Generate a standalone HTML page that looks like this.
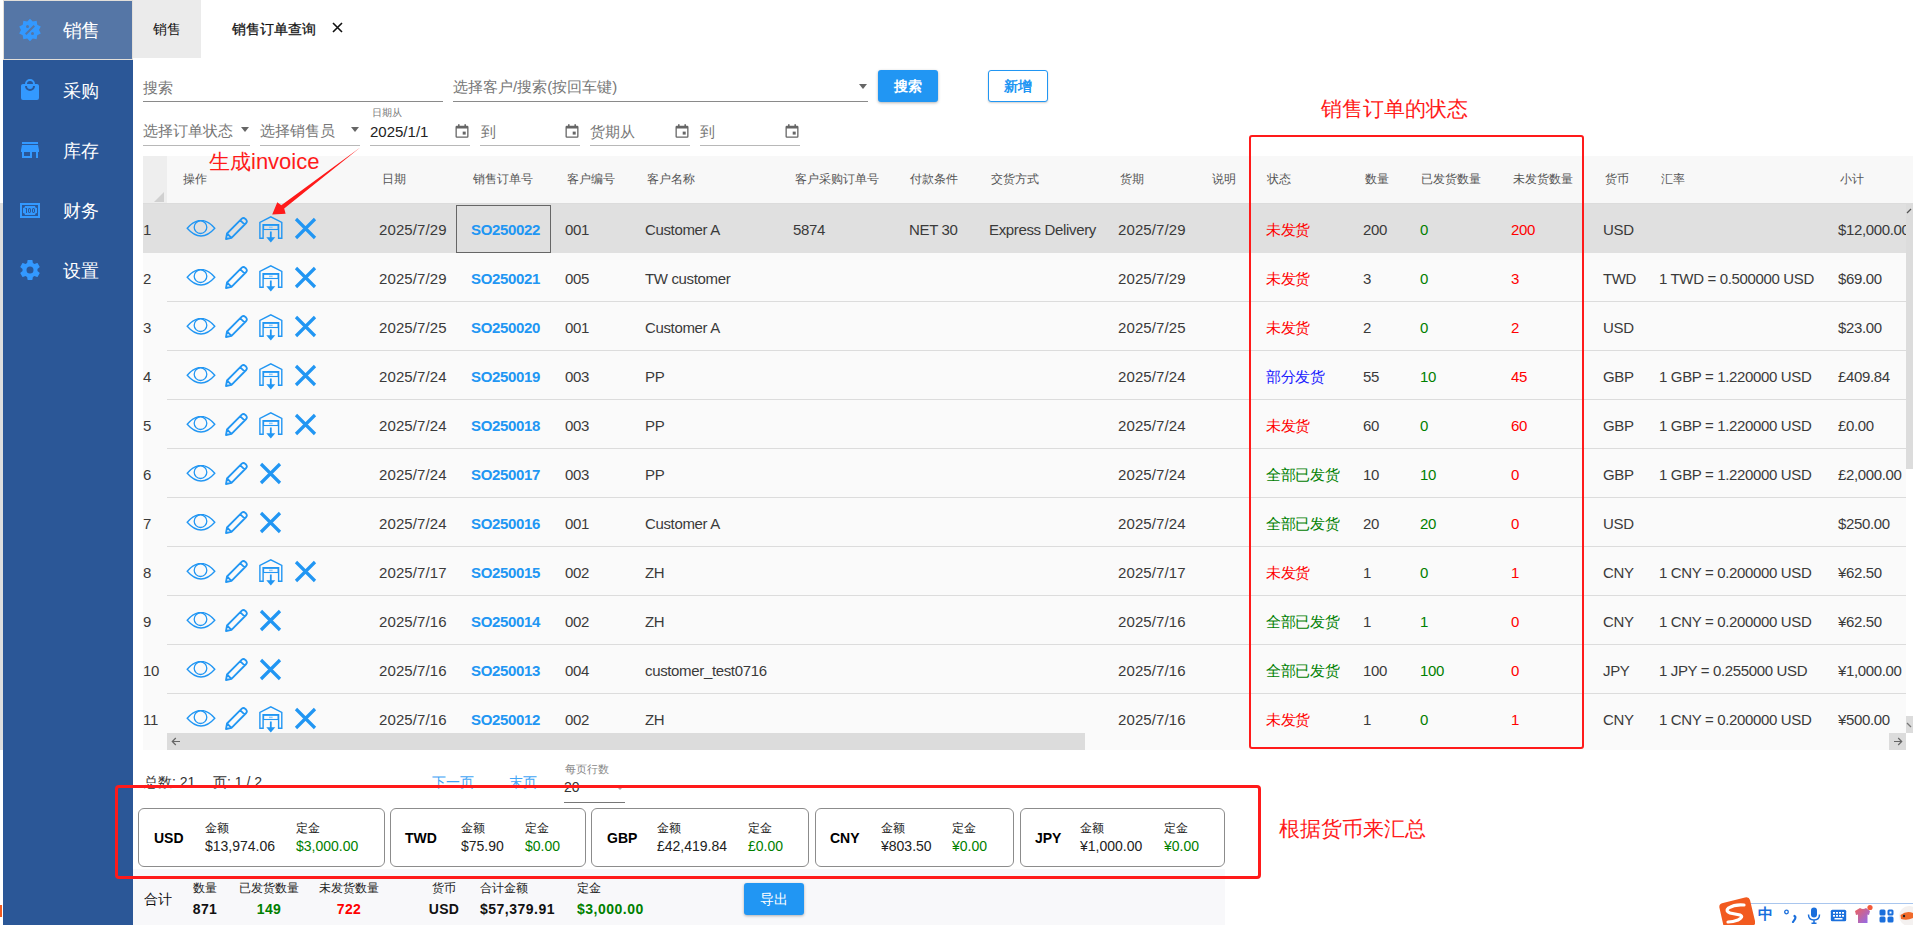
<!DOCTYPE html>
<html><head><meta charset="utf-8">
<style>
*{margin:0;padding:0;box-sizing:border-box}
html,body{width:1913px;height:925px;overflow:hidden;background:#fff;font-family:"Liberation Sans",sans-serif;color:#333;position:relative}
.abs{position:absolute}
#lstrip{position:absolute;left:0;top:203px;width:3px;height:547px;background:#dedede}
#side{position:absolute;left:3px;top:0;width:130px;height:925px;background:#2b5797}
#selitem{position:absolute;left:3px;top:0;width:130px;height:60px;background:#e2dfda}
#selin{position:absolute;left:4px;top:1px;width:128px;height:58px;background:#5576a6}
.mi{position:absolute;left:63px;color:#fff;font-size:18px;line-height:20px;height:20px;white-space:nowrap}
.mic{position:absolute}
#tab1{position:absolute;left:133px;top:0;width:68px;height:58px;background:#ebebeb}
.tabt{position:absolute;font-size:14px;line-height:16px;color:#111;white-space:nowrap}
.ph{position:absolute;font-size:15px;line-height:17px;color:#777;white-space:nowrap}
.ul{position:absolute;height:1px;background:#8a8a8a}
.ul2{position:absolute;height:1px;background:#b8b8b8}
.caret{position:absolute;width:0;height:0;border-left:4.5px solid transparent;border-right:4.5px solid transparent;border-top:5px solid #666}
.btn{position:absolute;border-radius:3px;font-size:14px;font-weight:bold;text-align:center;line-height:33px}
#hdrbg{position:absolute;left:143px;top:156px;width:1770px;height:48px;background:#f8f8f8;border-bottom:1px solid #dcdcdc}
#corner{position:absolute;left:143px;top:156px;width:24px;height:47px;background:#eeeeee}
.h{position:absolute;top:172px;font-size:12px;line-height:14px;color:#555;font-weight:500;white-space:nowrap}
#bodybg{position:absolute;left:143px;top:204px;width:1763px;height:546px;background:#fafafa}
.row{position:absolute;left:143px;width:1763px;height:49px}
.row.sel{background:#e0e0e0}
.rline{position:absolute;left:167px;width:1739px;height:1px;background:#dcdcdc}
.c{position:absolute;height:49px;line-height:49px;padding-top:1px;font-size:15px;color:#3a3a3a;white-space:nowrap;letter-spacing:-0.35px}
.c.d{letter-spacing:0.1px}
.c.so{color:#2196f3;font-weight:bold}
.c.red{color:#ff0000;font-weight:350}
.c.green{color:#008000;font-weight:350}
.c.blue{color:#2020ff;font-weight:350}
.ic{position:absolute}
.pg{font-size:14px;line-height:16px;color:#333;white-space:nowrap}
.anno{font-size:21px;line-height:24px;color:#ff1a1a;white-space:nowrap}
.card{position:absolute;top:808px;height:59px;border:1.3px solid #8c8c8c;border-radius:6px;background:#fff}
.cc{position:absolute;font-size:14px;line-height:16px;white-space:nowrap;color:#222}
.cl{position:absolute;font-size:12px;line-height:14px;white-space:nowrap;color:#222}
.selcell{position:absolute;left:456px;width:95px;height:48px;border:1px solid #666}
</style></head><body>
<div id="lstrip"></div><div class="abs" style="left:0;top:905px;width:2px;height:12px;background:#f25a1f"></div>
<div id="side"></div>
<div id="selitem"></div><div id="selin"></div>
<!-- menu icons -->
<svg class="mic" style="left:18px;top:18px" width="24" height="24" viewBox="0 0 24 24"><path fill="#3399ff" fill-rule="evenodd" d="M18.65,2.85L19.26,6.71L22.77,8.5L21,12L22.78,15.5L19.24,17.29L18.63,21.15L14.74,20.54L11.97,23.3L9.19,20.5L5.33,21.14L4.71,17.25L1.22,15.47L3,11.97L1.23,8.5L4.74,6.69L5.37,2.86L9.22,3.5L12,0.69L14.77,3.46L18.65,2.85M9.5,7A1.5,1.5 0 0,0 8,8.5A1.5,1.5 0 0,0 9.5,10A1.5,1.5 0 0,0 11,8.5A1.5,1.5 0 0,0 9.5,7M14.5,14A1.5,1.5 0 0,0 13,15.5A1.5,1.5 0 0,0 14.5,17A1.5,1.5 0 0,0 16,15.5A1.5,1.5 0 0,0 14.5,14M8.41,17L17,8.41L15.59,7L7,15.59L8.41,17Z"/></svg>
<svg class="mic" style="left:18px;top:78px" width="24" height="24" viewBox="0 0 24 24"><path fill="#3399ff" fill-rule="evenodd" d="M12,13A5,5 0 0,1 7,8H9A3,3 0 0,0 12,11A3,3 0 0,0 15,8H17A5,5 0 0,1 12,13M12,3A3,3 0 0,1 15,6H9A3,3 0 0,1 12,3M19,6H17A5,5 0 0,0 12,1A5,5 0 0,0 7,6H5C3.89,6 3,6.89 3,8V20A2,2 0 0,0 5,22H19A2,2 0 0,0 21,20V8C21,6.89 20.1,6 19,6Z"/></svg>
<svg class="mic" style="left:18px;top:138px" width="24" height="24" viewBox="0 0 24 24"><path fill="#3399ff" fill-rule="evenodd" d="M12,18H6V14H12V18ZM21,14V12L20,7H4L3,12V14H4V20H14V14H18V20H20V14H21ZM20,4H4V6H20V4Z"/></svg>
<svg class="mic" style="left:18px;top:198px" width="24" height="24" viewBox="0 0 24 24"><path fill="#3399ff" fill-rule="evenodd" d="M2,5H22V20H2V5M20,18V7H4V18H20M17,8A2,2 0 0,0 19,10V15A2,2 0 0,0 17,17H7A2,2 0 0,0 5,15V10A2,2 0 0,0 7,8H17M17,13V12C17,10.9 16.33,10 15.5,10C14.67,10 14,10.9 14,12V13C14,14.1 14.67,15 15.5,15C16.33,15 17,14.1 17,13M15.5,11A0.5,0.5 0 0,1 16,11.5V13.5A0.5,0.5 0 0,1 15.5,14A0.5,0.5 0 0,1 15,13.5V11.5A0.5,0.5 0 0,1 15.5,11M13,13V12C13,10.9 12.33,10 11.5,10C10.67,10 10,10.9 10,12V13C10,14.1 10.67,15 11.5,15C12.330,15 13,14.1 13,13M11.5,11A0.5,0.5 0 0,1 12,11.5V13.5A0.5,0.5 0 0,1 11.5,14A0.5,0.5 0 0,1 11,13.5V11.5A0.5,0.5 0 0,1 11.5,11M8,15H9V10H8L7,11H8V15Z"/></svg>
<svg class="mic" style="left:18px;top:258px" width="24" height="24" viewBox="0 0 24 24"><path fill="#3399ff" d="M12,15.5A3.5,3.5 0 0,1 8.5,12A3.5,3.5 0 0,1 12,8.5A3.5,3.5 0 0,1 15.5,12A3.5,3.5 0 0,1 12,15.5M19.43,12.97C19.47,12.65 19.5,12.33 19.5,12C19.5,11.67 19.47,11.34 19.43,11L21.54,9.37C21.73,9.22 21.78,8.95 21.66,8.73L19.66,5.27C19.54,5.05 19.27,4.96 19.05,5.05L16.56,6.05C16.04,5.66 15.5,5.32 14.87,5.07L14.5,2.42C14.46,2.18 14.25,2 14,2H10C9.75,2 9.54,2.18 9.5,2.42L9.13,5.07C8.5,5.32 7.96,5.66 7.44,6.05L4.95,5.05C4.73,4.96 4.46,5.05 4.34,5.27L2.34,8.73C2.21,8.95 2.27,9.22 2.46,9.37L4.57,11C4.53,11.34 4.5,11.67 4.5,12C4.5,12.33 4.53,12.65 4.57,12.97L2.46,14.63C2.27,14.78 2.21,15.05 2.34,15.27L4.34,18.73C4.46,18.95 4.73,19.03 4.95,18.95L7.44,17.94C7.96,18.34 8.5,18.68 9.13,18.93L9.5,21.58C9.54,21.82 9.75,22 10,22H14C14.25,22 14.46,21.82 14.5,21.58L14.87,18.93C15.5,18.67 16.04,18.34 16.56,17.94L19.05,18.95C19.27,19.03 19.54,18.95 19.66,18.73L21.66,15.27C21.78,15.05 21.73,14.78 21.54,14.63L19.43,12.97Z"/></svg>
<div class="mi" style="top:20.5px;font-size:19px;letter-spacing:-1px">销售</div>
<div class="mi" style="top:81px">采购</div>
<div class="mi" style="top:141px">库存</div>
<div class="mi" style="top:201px">财务</div>
<div class="mi" style="top:261px">设置</div>

<!-- tabs -->
<div id="tab1"></div>
<div class="tabt" style="left:153px;top:21px">销售</div>
<div class="tabt" style="left:232px;top:21px;font-weight:500;-webkit-text-stroke:0.25px #111">销售订单查询</div>
<svg class="abs" style="left:332px;top:22px" width="11" height="11" viewBox="0 0 11 11"><path d="M1 1 L10 10 M10 1 L1 10" stroke="#111" stroke-width="1.6"/></svg>

<!-- search row -->
<div class="ph" style="left:143px;top:79px">搜索</div>
<div class="ul" style="left:143px;top:101px;width:300px"></div>
<div class="ph" style="left:453px;top:78px">选择客户/搜索(按回车键)</div>
<div class="caret" style="left:859px;top:84px"></div>
<div class="ul" style="left:453px;top:101px;width:415px"></div>
<div class="btn" style="left:878px;top:70px;width:60px;height:32px;background:#2196f3;color:#fff;box-shadow:0 1px 3px rgba(0,0,0,.3)">搜索</div>
<div class="btn" style="left:988px;top:70px;width:60px;height:32px;background:#fff;color:#2196f3;border:1px solid #2196f3;line-height:30px;box-shadow:0 1px 2px rgba(0,0,0,.2)">新增</div>

<!-- filter row -->
<div class="ph" style="left:143px;top:122px">选择订单状态</div>
<div class="caret" style="left:241px;top:127px"></div>
<div class="ul2" style="left:143px;top:145px;width:107px"></div>
<div class="ph" style="left:260px;top:122px">选择销售员</div>
<div class="caret" style="left:351px;top:127px"></div>
<div class="ul2" style="left:260px;top:145px;width:100px"></div>
<div class="ph" style="left:372px;top:107px;font-size:10px;line-height:11px">日期从</div>
<div class="ph" style="left:370px;top:123px;color:#222">2025/1/1</div>
<div class="ul2" style="left:370px;top:145px;width:100px"></div>
<div class="ph" style="left:481px;top:123px">到</div>
<div class="ul2" style="left:480px;top:145px;width:100px"></div>
<div class="ph" style="left:590px;top:123px">货期从</div>
<div class="ul2" style="left:590px;top:145px;width:100px"></div>
<div class="ph" style="left:700px;top:123px">到</div>
<div class="ul2" style="left:700px;top:145px;width:100px"></div>
<svg class="abs" style="left:455px;top:124px" width="14" height="14" viewBox="0 0 14 14"><path fill="#666" d="M3 0.3h1.6v1.5h4.8V0.3H11v1.5h1.2Q13.5 1.8 13.5 3.2v9.2Q13.5 13.7 12.2 13.7H1.8Q0.5 13.7 0.5 12.4V3.2Q0.5 1.8 1.8 1.8H3Z M1.8 4.6v7.8h10.4V4.6Z"/><rect x="7.7" y="7.6" width="3" height="3" fill="#666"/></svg><svg class="abs" style="left:565px;top:124px" width="14" height="14" viewBox="0 0 14 14"><path fill="#666" d="M3 0.3h1.6v1.5h4.8V0.3H11v1.5h1.2Q13.5 1.8 13.5 3.2v9.2Q13.5 13.7 12.2 13.7H1.8Q0.5 13.7 0.5 12.4V3.2Q0.5 1.8 1.8 1.8H3Z M1.8 4.6v7.8h10.4V4.6Z"/><rect x="7.7" y="7.6" width="3" height="3" fill="#666"/></svg><svg class="abs" style="left:675px;top:124px" width="14" height="14" viewBox="0 0 14 14"><path fill="#666" d="M3 0.3h1.6v1.5h4.8V0.3H11v1.5h1.2Q13.5 1.8 13.5 3.2v9.2Q13.5 13.7 12.2 13.7H1.8Q0.5 13.7 0.5 12.4V3.2Q0.5 1.8 1.8 1.8H3Z M1.8 4.6v7.8h10.4V4.6Z"/><rect x="7.7" y="7.6" width="3" height="3" fill="#666"/></svg><svg class="abs" style="left:785px;top:124px" width="14" height="14" viewBox="0 0 14 14"><path fill="#666" d="M3 0.3h1.6v1.5h4.8V0.3H11v1.5h1.2Q13.5 1.8 13.5 3.2v9.2Q13.5 13.7 12.2 13.7H1.8Q0.5 13.7 0.5 12.4V3.2Q0.5 1.8 1.8 1.8H3Z M1.8 4.6v7.8h10.4V4.6Z"/><rect x="7.7" y="7.6" width="3" height="3" fill="#666"/></svg>

<!-- grid -->
<div id="hdrbg"></div>
<div id="corner"></div>
<svg class="abs" style="left:154px;top:192px" width="10" height="10"><path d="M10 0 L10 10 L0 10 Z" fill="#d0d0d0"/></svg>
<div class="h" style="left:183px">操作</div><div class="h" style="left:382px">日期</div><div class="h" style="left:473px">销售订单号</div><div class="h" style="left:567px">客户编号</div><div class="h" style="left:647px">客户名称</div><div class="h" style="left:795px">客户采购订单号</div><div class="h" style="left:910px">付款条件</div><div class="h" style="left:991px">交货方式</div><div class="h" style="left:1120px">货期</div><div class="h" style="left:1212px">说明</div><div class="h" style="left:1267px">状态</div><div class="h" style="left:1365px">数量</div><div class="h" style="left:1421px">已发货数量</div><div class="h" style="left:1513px">未发货数量</div><div class="h" style="left:1605px">货币</div><div class="h" style="left:1661px">汇率</div><div class="h" style="left:1840px">小计</div>
<div id="bodybg"></div>
<div class="row sel" style="top:204px"></div>
<div class="c" style="left:143px;top:204px">1</div>
<div class="c d" style="left:379px;top:204px">2025/7/29</div>
<div class="c so" style="left:471px;top:204px">SO250022</div>
<div class="c" style="left:565px;top:204px">001</div>
<div class="c" style="left:645px;top:204px">Customer A</div>
<div class="c" style="left:793px;top:204px">5874</div>
<div class="c" style="left:909px;top:204px">NET 30</div>
<div class="c" style="left:989px;top:204px">Express Delivery</div>
<div class="c d" style="left:1118px;top:204px">2025/7/29</div>
<div class="c red" style="left:1266px;top:204px">未发货</div>
<div class="c" style="left:1363px;top:204px">200</div>
<div class="c green" style="left:1420px;top:204px">0</div>
<div class="c red" style="left:1511px;top:204px">200</div>
<div class="c" style="left:1603px;top:204px">USD</div>
<div class="c" style="left:1838px;top:204px">$12,000.00</div>
<svg class="ic" style="left:186px;top:220px" width="30" height="17" viewBox="0 0 30 17"><path d="M1.2 8.2 Q15 -7.4 28.8 8.2 Q15 23.8 1.2 8.2 Z" fill="none" stroke="#2196f3" stroke-width="1.3"/><circle cx="14.5" cy="7.2" r="6.3" fill="none" stroke="#2196f3" stroke-width="1.3"/></svg>
<svg class="ic" style="left:225px;top:217px" width="23" height="23" viewBox="0 0 23 23"><path d="M1 22 L2 16.5 L16.8 1.7 Q18.5 0.2 20.3 1.8 L21 2.5 Q22.6 4.3 21.2 6 L6.5 20.8 Z M2 16.5 L6.5 20.8 M15.3 3.3 L19.8 7.6" fill="none" stroke="#2196f3" stroke-width="1.8" stroke-linejoin="round"/></svg>
<svg class="ic" style="left:258px;top:216px" width="26" height="28" viewBox="0 0 26 28"><path d="M1.9 22.3 V6.4 L12.8 0.9 L23.8 6.4 V22.3 H20.6 V8.6 H5.1 V22.3 Z" fill="none" stroke="#2196f3" stroke-width="1.4" stroke-linejoin="miter"/><rect x="5.6" y="9.3" width="14.5" height="4.2" fill="none" stroke="#2196f3" stroke-width="1.1"/><rect x="11" y="10.6" width="3.6" height="1.6" fill="#90caf9"/><path d="M12.8 15.5 V24" stroke="#2196f3" stroke-width="1.8"/><path d="M8.3 21.3 L12.8 26.6 L17.3 21.3 Z" fill="#2196f3"/></svg>
<svg class="ic" style="left:294px;top:217px" width="23" height="23" viewBox="0 0 23 23"><path d="M2 2 L21 21 M21 2 L2 21" stroke="#2196f3" stroke-width="3.2"/></svg>
<div class="selcell" style="top:205px"></div>
<div class="row" style="top:253px"></div>
<div class="rline" style="top:301px"></div>
<div class="c" style="left:143px;top:253px">2</div>
<div class="c d" style="left:379px;top:253px">2025/7/29</div>
<div class="c so" style="left:471px;top:253px">SO250021</div>
<div class="c" style="left:565px;top:253px">005</div>
<div class="c" style="left:645px;top:253px">TW customer</div>
<div class="c d" style="left:1118px;top:253px">2025/7/29</div>
<div class="c red" style="left:1266px;top:253px">未发货</div>
<div class="c" style="left:1363px;top:253px">3</div>
<div class="c green" style="left:1420px;top:253px">0</div>
<div class="c red" style="left:1511px;top:253px">3</div>
<div class="c" style="left:1603px;top:253px">TWD</div>
<div class="c" style="left:1659px;top:253px">1 TWD = 0.500000 USD</div>
<div class="c" style="left:1838px;top:253px">$69.00</div>
<svg class="ic" style="left:186px;top:269px" width="30" height="17" viewBox="0 0 30 17"><path d="M1.2 8.2 Q15 -7.4 28.8 8.2 Q15 23.8 1.2 8.2 Z" fill="none" stroke="#2196f3" stroke-width="1.3"/><circle cx="14.5" cy="7.2" r="6.3" fill="none" stroke="#2196f3" stroke-width="1.3"/></svg>
<svg class="ic" style="left:225px;top:266px" width="23" height="23" viewBox="0 0 23 23"><path d="M1 22 L2 16.5 L16.8 1.7 Q18.5 0.2 20.3 1.8 L21 2.5 Q22.6 4.3 21.2 6 L6.5 20.8 Z M2 16.5 L6.5 20.8 M15.3 3.3 L19.8 7.6" fill="none" stroke="#2196f3" stroke-width="1.8" stroke-linejoin="round"/></svg>
<svg class="ic" style="left:258px;top:265px" width="26" height="28" viewBox="0 0 26 28"><path d="M1.9 22.3 V6.4 L12.8 0.9 L23.8 6.4 V22.3 H20.6 V8.6 H5.1 V22.3 Z" fill="none" stroke="#2196f3" stroke-width="1.4" stroke-linejoin="miter"/><rect x="5.6" y="9.3" width="14.5" height="4.2" fill="none" stroke="#2196f3" stroke-width="1.1"/><rect x="11" y="10.6" width="3.6" height="1.6" fill="#90caf9"/><path d="M12.8 15.5 V24" stroke="#2196f3" stroke-width="1.8"/><path d="M8.3 21.3 L12.8 26.6 L17.3 21.3 Z" fill="#2196f3"/></svg>
<svg class="ic" style="left:294px;top:266px" width="23" height="23" viewBox="0 0 23 23"><path d="M2 2 L21 21 M21 2 L2 21" stroke="#2196f3" stroke-width="3.2"/></svg>
<div class="row" style="top:302px"></div>
<div class="rline" style="top:350px"></div>
<div class="c" style="left:143px;top:302px">3</div>
<div class="c d" style="left:379px;top:302px">2025/7/25</div>
<div class="c so" style="left:471px;top:302px">SO250020</div>
<div class="c" style="left:565px;top:302px">001</div>
<div class="c" style="left:645px;top:302px">Customer A</div>
<div class="c d" style="left:1118px;top:302px">2025/7/25</div>
<div class="c red" style="left:1266px;top:302px">未发货</div>
<div class="c" style="left:1363px;top:302px">2</div>
<div class="c green" style="left:1420px;top:302px">0</div>
<div class="c red" style="left:1511px;top:302px">2</div>
<div class="c" style="left:1603px;top:302px">USD</div>
<div class="c" style="left:1838px;top:302px">$23.00</div>
<svg class="ic" style="left:186px;top:318px" width="30" height="17" viewBox="0 0 30 17"><path d="M1.2 8.2 Q15 -7.4 28.8 8.2 Q15 23.8 1.2 8.2 Z" fill="none" stroke="#2196f3" stroke-width="1.3"/><circle cx="14.5" cy="7.2" r="6.3" fill="none" stroke="#2196f3" stroke-width="1.3"/></svg>
<svg class="ic" style="left:225px;top:315px" width="23" height="23" viewBox="0 0 23 23"><path d="M1 22 L2 16.5 L16.8 1.7 Q18.5 0.2 20.3 1.8 L21 2.5 Q22.6 4.3 21.2 6 L6.5 20.8 Z M2 16.5 L6.5 20.8 M15.3 3.3 L19.8 7.6" fill="none" stroke="#2196f3" stroke-width="1.8" stroke-linejoin="round"/></svg>
<svg class="ic" style="left:258px;top:314px" width="26" height="28" viewBox="0 0 26 28"><path d="M1.9 22.3 V6.4 L12.8 0.9 L23.8 6.4 V22.3 H20.6 V8.6 H5.1 V22.3 Z" fill="none" stroke="#2196f3" stroke-width="1.4" stroke-linejoin="miter"/><rect x="5.6" y="9.3" width="14.5" height="4.2" fill="none" stroke="#2196f3" stroke-width="1.1"/><rect x="11" y="10.6" width="3.6" height="1.6" fill="#90caf9"/><path d="M12.8 15.5 V24" stroke="#2196f3" stroke-width="1.8"/><path d="M8.3 21.3 L12.8 26.6 L17.3 21.3 Z" fill="#2196f3"/></svg>
<svg class="ic" style="left:294px;top:315px" width="23" height="23" viewBox="0 0 23 23"><path d="M2 2 L21 21 M21 2 L2 21" stroke="#2196f3" stroke-width="3.2"/></svg>
<div class="row" style="top:351px"></div>
<div class="rline" style="top:399px"></div>
<div class="c" style="left:143px;top:351px">4</div>
<div class="c d" style="left:379px;top:351px">2025/7/24</div>
<div class="c so" style="left:471px;top:351px">SO250019</div>
<div class="c" style="left:565px;top:351px">003</div>
<div class="c" style="left:645px;top:351px">PP</div>
<div class="c d" style="left:1118px;top:351px">2025/7/24</div>
<div class="c blue" style="left:1266px;top:351px">部分发货</div>
<div class="c" style="left:1363px;top:351px">55</div>
<div class="c green" style="left:1420px;top:351px">10</div>
<div class="c red" style="left:1511px;top:351px">45</div>
<div class="c" style="left:1603px;top:351px">GBP</div>
<div class="c" style="left:1659px;top:351px">1 GBP = 1.220000 USD</div>
<div class="c" style="left:1838px;top:351px">£409.84</div>
<svg class="ic" style="left:186px;top:367px" width="30" height="17" viewBox="0 0 30 17"><path d="M1.2 8.2 Q15 -7.4 28.8 8.2 Q15 23.8 1.2 8.2 Z" fill="none" stroke="#2196f3" stroke-width="1.3"/><circle cx="14.5" cy="7.2" r="6.3" fill="none" stroke="#2196f3" stroke-width="1.3"/></svg>
<svg class="ic" style="left:225px;top:364px" width="23" height="23" viewBox="0 0 23 23"><path d="M1 22 L2 16.5 L16.8 1.7 Q18.5 0.2 20.3 1.8 L21 2.5 Q22.6 4.3 21.2 6 L6.5 20.8 Z M2 16.5 L6.5 20.8 M15.3 3.3 L19.8 7.6" fill="none" stroke="#2196f3" stroke-width="1.8" stroke-linejoin="round"/></svg>
<svg class="ic" style="left:258px;top:363px" width="26" height="28" viewBox="0 0 26 28"><path d="M1.9 22.3 V6.4 L12.8 0.9 L23.8 6.4 V22.3 H20.6 V8.6 H5.1 V22.3 Z" fill="none" stroke="#2196f3" stroke-width="1.4" stroke-linejoin="miter"/><rect x="5.6" y="9.3" width="14.5" height="4.2" fill="none" stroke="#2196f3" stroke-width="1.1"/><rect x="11" y="10.6" width="3.6" height="1.6" fill="#90caf9"/><path d="M12.8 15.5 V24" stroke="#2196f3" stroke-width="1.8"/><path d="M8.3 21.3 L12.8 26.6 L17.3 21.3 Z" fill="#2196f3"/></svg>
<svg class="ic" style="left:294px;top:364px" width="23" height="23" viewBox="0 0 23 23"><path d="M2 2 L21 21 M21 2 L2 21" stroke="#2196f3" stroke-width="3.2"/></svg>
<div class="row" style="top:400px"></div>
<div class="rline" style="top:448px"></div>
<div class="c" style="left:143px;top:400px">5</div>
<div class="c d" style="left:379px;top:400px">2025/7/24</div>
<div class="c so" style="left:471px;top:400px">SO250018</div>
<div class="c" style="left:565px;top:400px">003</div>
<div class="c" style="left:645px;top:400px">PP</div>
<div class="c d" style="left:1118px;top:400px">2025/7/24</div>
<div class="c red" style="left:1266px;top:400px">未发货</div>
<div class="c" style="left:1363px;top:400px">60</div>
<div class="c green" style="left:1420px;top:400px">0</div>
<div class="c red" style="left:1511px;top:400px">60</div>
<div class="c" style="left:1603px;top:400px">GBP</div>
<div class="c" style="left:1659px;top:400px">1 GBP = 1.220000 USD</div>
<div class="c" style="left:1838px;top:400px">£0.00</div>
<svg class="ic" style="left:186px;top:416px" width="30" height="17" viewBox="0 0 30 17"><path d="M1.2 8.2 Q15 -7.4 28.8 8.2 Q15 23.8 1.2 8.2 Z" fill="none" stroke="#2196f3" stroke-width="1.3"/><circle cx="14.5" cy="7.2" r="6.3" fill="none" stroke="#2196f3" stroke-width="1.3"/></svg>
<svg class="ic" style="left:225px;top:413px" width="23" height="23" viewBox="0 0 23 23"><path d="M1 22 L2 16.5 L16.8 1.7 Q18.5 0.2 20.3 1.8 L21 2.5 Q22.6 4.3 21.2 6 L6.5 20.8 Z M2 16.5 L6.5 20.8 M15.3 3.3 L19.8 7.6" fill="none" stroke="#2196f3" stroke-width="1.8" stroke-linejoin="round"/></svg>
<svg class="ic" style="left:258px;top:412px" width="26" height="28" viewBox="0 0 26 28"><path d="M1.9 22.3 V6.4 L12.8 0.9 L23.8 6.4 V22.3 H20.6 V8.6 H5.1 V22.3 Z" fill="none" stroke="#2196f3" stroke-width="1.4" stroke-linejoin="miter"/><rect x="5.6" y="9.3" width="14.5" height="4.2" fill="none" stroke="#2196f3" stroke-width="1.1"/><rect x="11" y="10.6" width="3.6" height="1.6" fill="#90caf9"/><path d="M12.8 15.5 V24" stroke="#2196f3" stroke-width="1.8"/><path d="M8.3 21.3 L12.8 26.6 L17.3 21.3 Z" fill="#2196f3"/></svg>
<svg class="ic" style="left:294px;top:413px" width="23" height="23" viewBox="0 0 23 23"><path d="M2 2 L21 21 M21 2 L2 21" stroke="#2196f3" stroke-width="3.2"/></svg>
<div class="row" style="top:449px"></div>
<div class="rline" style="top:497px"></div>
<div class="c" style="left:143px;top:449px">6</div>
<div class="c d" style="left:379px;top:449px">2025/7/24</div>
<div class="c so" style="left:471px;top:449px">SO250017</div>
<div class="c" style="left:565px;top:449px">003</div>
<div class="c" style="left:645px;top:449px">PP</div>
<div class="c d" style="left:1118px;top:449px">2025/7/24</div>
<div class="c green" style="left:1266px;top:449px">全部已发货</div>
<div class="c" style="left:1363px;top:449px">10</div>
<div class="c green" style="left:1420px;top:449px">10</div>
<div class="c red" style="left:1511px;top:449px">0</div>
<div class="c" style="left:1603px;top:449px">GBP</div>
<div class="c" style="left:1659px;top:449px">1 GBP = 1.220000 USD</div>
<div class="c" style="left:1838px;top:449px">£2,000.00</div>
<svg class="ic" style="left:186px;top:465px" width="30" height="17" viewBox="0 0 30 17"><path d="M1.2 8.2 Q15 -7.4 28.8 8.2 Q15 23.8 1.2 8.2 Z" fill="none" stroke="#2196f3" stroke-width="1.3"/><circle cx="14.5" cy="7.2" r="6.3" fill="none" stroke="#2196f3" stroke-width="1.3"/></svg>
<svg class="ic" style="left:225px;top:462px" width="23" height="23" viewBox="0 0 23 23"><path d="M1 22 L2 16.5 L16.8 1.7 Q18.5 0.2 20.3 1.8 L21 2.5 Q22.6 4.3 21.2 6 L6.5 20.8 Z M2 16.5 L6.5 20.8 M15.3 3.3 L19.8 7.6" fill="none" stroke="#2196f3" stroke-width="1.8" stroke-linejoin="round"/></svg>
<svg class="ic" style="left:259px;top:462px" width="23" height="23" viewBox="0 0 23 23"><path d="M2 2 L21 21 M21 2 L2 21" stroke="#2196f3" stroke-width="3.2"/></svg>
<div class="row" style="top:498px"></div>
<div class="rline" style="top:546px"></div>
<div class="c" style="left:143px;top:498px">7</div>
<div class="c d" style="left:379px;top:498px">2025/7/24</div>
<div class="c so" style="left:471px;top:498px">SO250016</div>
<div class="c" style="left:565px;top:498px">001</div>
<div class="c" style="left:645px;top:498px">Customer A</div>
<div class="c d" style="left:1118px;top:498px">2025/7/24</div>
<div class="c green" style="left:1266px;top:498px">全部已发货</div>
<div class="c" style="left:1363px;top:498px">20</div>
<div class="c green" style="left:1420px;top:498px">20</div>
<div class="c red" style="left:1511px;top:498px">0</div>
<div class="c" style="left:1603px;top:498px">USD</div>
<div class="c" style="left:1838px;top:498px">$250.00</div>
<svg class="ic" style="left:186px;top:514px" width="30" height="17" viewBox="0 0 30 17"><path d="M1.2 8.2 Q15 -7.4 28.8 8.2 Q15 23.8 1.2 8.2 Z" fill="none" stroke="#2196f3" stroke-width="1.3"/><circle cx="14.5" cy="7.2" r="6.3" fill="none" stroke="#2196f3" stroke-width="1.3"/></svg>
<svg class="ic" style="left:225px;top:511px" width="23" height="23" viewBox="0 0 23 23"><path d="M1 22 L2 16.5 L16.8 1.7 Q18.5 0.2 20.3 1.8 L21 2.5 Q22.6 4.3 21.2 6 L6.5 20.8 Z M2 16.5 L6.5 20.8 M15.3 3.3 L19.8 7.6" fill="none" stroke="#2196f3" stroke-width="1.8" stroke-linejoin="round"/></svg>
<svg class="ic" style="left:259px;top:511px" width="23" height="23" viewBox="0 0 23 23"><path d="M2 2 L21 21 M21 2 L2 21" stroke="#2196f3" stroke-width="3.2"/></svg>
<div class="row" style="top:547px"></div>
<div class="rline" style="top:595px"></div>
<div class="c" style="left:143px;top:547px">8</div>
<div class="c d" style="left:379px;top:547px">2025/7/17</div>
<div class="c so" style="left:471px;top:547px">SO250015</div>
<div class="c" style="left:565px;top:547px">002</div>
<div class="c" style="left:645px;top:547px">ZH</div>
<div class="c d" style="left:1118px;top:547px">2025/7/17</div>
<div class="c red" style="left:1266px;top:547px">未发货</div>
<div class="c" style="left:1363px;top:547px">1</div>
<div class="c green" style="left:1420px;top:547px">0</div>
<div class="c red" style="left:1511px;top:547px">1</div>
<div class="c" style="left:1603px;top:547px">CNY</div>
<div class="c" style="left:1659px;top:547px">1 CNY = 0.200000 USD</div>
<div class="c" style="left:1838px;top:547px">¥62.50</div>
<svg class="ic" style="left:186px;top:563px" width="30" height="17" viewBox="0 0 30 17"><path d="M1.2 8.2 Q15 -7.4 28.8 8.2 Q15 23.8 1.2 8.2 Z" fill="none" stroke="#2196f3" stroke-width="1.3"/><circle cx="14.5" cy="7.2" r="6.3" fill="none" stroke="#2196f3" stroke-width="1.3"/></svg>
<svg class="ic" style="left:225px;top:560px" width="23" height="23" viewBox="0 0 23 23"><path d="M1 22 L2 16.5 L16.8 1.7 Q18.5 0.2 20.3 1.8 L21 2.5 Q22.6 4.3 21.2 6 L6.5 20.8 Z M2 16.5 L6.5 20.8 M15.3 3.3 L19.8 7.6" fill="none" stroke="#2196f3" stroke-width="1.8" stroke-linejoin="round"/></svg>
<svg class="ic" style="left:258px;top:559px" width="26" height="28" viewBox="0 0 26 28"><path d="M1.9 22.3 V6.4 L12.8 0.9 L23.8 6.4 V22.3 H20.6 V8.6 H5.1 V22.3 Z" fill="none" stroke="#2196f3" stroke-width="1.4" stroke-linejoin="miter"/><rect x="5.6" y="9.3" width="14.5" height="4.2" fill="none" stroke="#2196f3" stroke-width="1.1"/><rect x="11" y="10.6" width="3.6" height="1.6" fill="#90caf9"/><path d="M12.8 15.5 V24" stroke="#2196f3" stroke-width="1.8"/><path d="M8.3 21.3 L12.8 26.6 L17.3 21.3 Z" fill="#2196f3"/></svg>
<svg class="ic" style="left:294px;top:560px" width="23" height="23" viewBox="0 0 23 23"><path d="M2 2 L21 21 M21 2 L2 21" stroke="#2196f3" stroke-width="3.2"/></svg>
<div class="row" style="top:596px"></div>
<div class="rline" style="top:644px"></div>
<div class="c" style="left:143px;top:596px">9</div>
<div class="c d" style="left:379px;top:596px">2025/7/16</div>
<div class="c so" style="left:471px;top:596px">SO250014</div>
<div class="c" style="left:565px;top:596px">002</div>
<div class="c" style="left:645px;top:596px">ZH</div>
<div class="c d" style="left:1118px;top:596px">2025/7/16</div>
<div class="c green" style="left:1266px;top:596px">全部已发货</div>
<div class="c" style="left:1363px;top:596px">1</div>
<div class="c green" style="left:1420px;top:596px">1</div>
<div class="c red" style="left:1511px;top:596px">0</div>
<div class="c" style="left:1603px;top:596px">CNY</div>
<div class="c" style="left:1659px;top:596px">1 CNY = 0.200000 USD</div>
<div class="c" style="left:1838px;top:596px">¥62.50</div>
<svg class="ic" style="left:186px;top:612px" width="30" height="17" viewBox="0 0 30 17"><path d="M1.2 8.2 Q15 -7.4 28.8 8.2 Q15 23.8 1.2 8.2 Z" fill="none" stroke="#2196f3" stroke-width="1.3"/><circle cx="14.5" cy="7.2" r="6.3" fill="none" stroke="#2196f3" stroke-width="1.3"/></svg>
<svg class="ic" style="left:225px;top:609px" width="23" height="23" viewBox="0 0 23 23"><path d="M1 22 L2 16.5 L16.8 1.7 Q18.5 0.2 20.3 1.8 L21 2.5 Q22.6 4.3 21.2 6 L6.5 20.8 Z M2 16.5 L6.5 20.8 M15.3 3.3 L19.8 7.6" fill="none" stroke="#2196f3" stroke-width="1.8" stroke-linejoin="round"/></svg>
<svg class="ic" style="left:259px;top:609px" width="23" height="23" viewBox="0 0 23 23"><path d="M2 2 L21 21 M21 2 L2 21" stroke="#2196f3" stroke-width="3.2"/></svg>
<div class="row" style="top:645px"></div>
<div class="rline" style="top:693px"></div>
<div class="c" style="left:143px;top:645px">10</div>
<div class="c d" style="left:379px;top:645px">2025/7/16</div>
<div class="c so" style="left:471px;top:645px">SO250013</div>
<div class="c" style="left:565px;top:645px">004</div>
<div class="c" style="left:645px;top:645px">customer_test0716</div>
<div class="c d" style="left:1118px;top:645px">2025/7/16</div>
<div class="c green" style="left:1266px;top:645px">全部已发货</div>
<div class="c" style="left:1363px;top:645px">100</div>
<div class="c green" style="left:1420px;top:645px">100</div>
<div class="c red" style="left:1511px;top:645px">0</div>
<div class="c" style="left:1603px;top:645px">JPY</div>
<div class="c" style="left:1659px;top:645px">1 JPY = 0.255000 USD</div>
<div class="c" style="left:1838px;top:645px">¥1,000.00</div>
<svg class="ic" style="left:186px;top:661px" width="30" height="17" viewBox="0 0 30 17"><path d="M1.2 8.2 Q15 -7.4 28.8 8.2 Q15 23.8 1.2 8.2 Z" fill="none" stroke="#2196f3" stroke-width="1.3"/><circle cx="14.5" cy="7.2" r="6.3" fill="none" stroke="#2196f3" stroke-width="1.3"/></svg>
<svg class="ic" style="left:225px;top:658px" width="23" height="23" viewBox="0 0 23 23"><path d="M1 22 L2 16.5 L16.8 1.7 Q18.5 0.2 20.3 1.8 L21 2.5 Q22.6 4.3 21.2 6 L6.5 20.8 Z M2 16.5 L6.5 20.8 M15.3 3.3 L19.8 7.6" fill="none" stroke="#2196f3" stroke-width="1.8" stroke-linejoin="round"/></svg>
<svg class="ic" style="left:259px;top:658px" width="23" height="23" viewBox="0 0 23 23"><path d="M2 2 L21 21 M21 2 L2 21" stroke="#2196f3" stroke-width="3.2"/></svg>
<div class="row" style="top:694px"></div>
<div class="c" style="left:143px;top:694px">11</div>
<div class="c d" style="left:379px;top:694px">2025/7/16</div>
<div class="c so" style="left:471px;top:694px">SO250012</div>
<div class="c" style="left:565px;top:694px">002</div>
<div class="c" style="left:645px;top:694px">ZH</div>
<div class="c d" style="left:1118px;top:694px">2025/7/16</div>
<div class="c red" style="left:1266px;top:694px">未发货</div>
<div class="c" style="left:1363px;top:694px">1</div>
<div class="c green" style="left:1420px;top:694px">0</div>
<div class="c red" style="left:1511px;top:694px">1</div>
<div class="c" style="left:1603px;top:694px">CNY</div>
<div class="c" style="left:1659px;top:694px">1 CNY = 0.200000 USD</div>
<div class="c" style="left:1838px;top:694px">¥500.00</div>
<svg class="ic" style="left:186px;top:710px" width="30" height="17" viewBox="0 0 30 17"><path d="M1.2 8.2 Q15 -7.4 28.8 8.2 Q15 23.8 1.2 8.2 Z" fill="none" stroke="#2196f3" stroke-width="1.3"/><circle cx="14.5" cy="7.2" r="6.3" fill="none" stroke="#2196f3" stroke-width="1.3"/></svg>
<svg class="ic" style="left:225px;top:707px" width="23" height="23" viewBox="0 0 23 23"><path d="M1 22 L2 16.5 L16.8 1.7 Q18.5 0.2 20.3 1.8 L21 2.5 Q22.6 4.3 21.2 6 L6.5 20.8 Z M2 16.5 L6.5 20.8 M15.3 3.3 L19.8 7.6" fill="none" stroke="#2196f3" stroke-width="1.8" stroke-linejoin="round"/></svg>
<svg class="ic" style="left:258px;top:706px" width="26" height="28" viewBox="0 0 26 28"><path d="M1.9 22.3 V6.4 L12.8 0.9 L23.8 6.4 V22.3 H20.6 V8.6 H5.1 V22.3 Z" fill="none" stroke="#2196f3" stroke-width="1.4" stroke-linejoin="miter"/><rect x="5.6" y="9.3" width="14.5" height="4.2" fill="none" stroke="#2196f3" stroke-width="1.1"/><rect x="11" y="10.6" width="3.6" height="1.6" fill="#90caf9"/><path d="M12.8 15.5 V24" stroke="#2196f3" stroke-width="1.8"/><path d="M8.3 21.3 L12.8 26.6 L17.3 21.3 Z" fill="#2196f3"/></svg>
<svg class="ic" style="left:294px;top:707px" width="23" height="23" viewBox="0 0 23 23"><path d="M2 2 L21 21 M21 2 L2 21" stroke="#2196f3" stroke-width="3.2"/></svg>


<!-- horizontal scrollbar -->
<div class="abs" style="left:167px;top:733px;width:918px;height:17px;background:#dcdcdc"></div>
<svg class="abs" style="left:171px;top:737px" width="10" height="9" viewBox="0 0 10 9"><path d="M9 4.5H1.5M4.8 1L1.3 4.5L4.8 8" fill="none" stroke="#666" stroke-width="1.2"/></svg>
<div class="abs" style="left:1889px;top:733px;width:17px;height:17px;background:#dcdcdc"></div>
<svg class="abs" style="left:1893px;top:737px" width="10" height="9" viewBox="0 0 10 9"><path d="M1 4.5H8.5M5.2 1L8.7 4.5L5.2 8" fill="none" stroke="#666" stroke-width="1.2"/></svg>
<!-- vertical scrollbar -->
<div class="abs" style="left:1906px;top:203px;width:7px;height:266px;background:#dcdcdc"></div>
<div class="abs" style="left:1906px;top:716px;width:7px;height:17px;background:#dcdcdc"></div>
<svg class="abs" style="left:1906px;top:207px" width="7" height="8"><path d="M1 6 L5 2" stroke="#555" stroke-width="1.2" fill="none"/></svg>
<svg class="abs" style="left:1906px;top:720px" width="7" height="8"><path d="M1 3 L5 7" stroke="#777" stroke-width="1.2" fill="none"/></svg>

<!-- pagination -->
<div class="abs pg" style="left:144px;top:774px">总数: 21</div><div class="abs pg" style="left:213px;top:774px">页: 1 / 2</div>
<div class="abs pg" style="left:432px;top:774px;color:#42a5f5">下一页</div>
<div class="abs pg" style="left:509px;top:774px;color:#42a5f5">末页</div>
<div class="abs" style="left:565px;top:763px;font-size:11px;line-height:13px;color:#888">每页行数</div>
<div class="abs pg" style="left:564px;top:779px">20</div>
<div class="caret" style="left:617px;top:787px;border-top-color:#aaa;border-left-width:3px;border-right-width:3px;border-top-width:3px"></div>
<div class="abs" style="left:564px;top:802px;width:61px;height:1px;background:#777"></div>

<!-- total bar -->
<div class="abs" style="left:133px;top:869px;width:1092px;height:56px;background:#f8f8fa"></div>
<!-- cards -->
<div class="card" style="left:138px;width:247px"></div>
<div class="cc" style="left:154px;top:830px;font-weight:bold;color:#000">USD</div>
<div class="cl" style="left:205px;top:821px">金额</div>
<div class="cc" style="left:205px;top:838px">$13,974.06</div>
<div class="cl" style="left:296px;top:821px">定金</div>
<div class="cc" style="left:296px;top:838px;color:#008000">$3,000.00</div>
<div class="card" style="left:390px;width:196px"></div>
<div class="cc" style="left:405px;top:830px;font-weight:bold;color:#000">TWD</div>
<div class="cl" style="left:461px;top:821px">金额</div>
<div class="cc" style="left:461px;top:838px">$75.90</div>
<div class="cl" style="left:525px;top:821px">定金</div>
<div class="cc" style="left:525px;top:838px;color:#008000">$0.00</div>
<div class="card" style="left:591px;width:218px"></div>
<div class="cc" style="left:607px;top:830px;font-weight:bold;color:#000">GBP</div>
<div class="cl" style="left:657px;top:821px">金额</div>
<div class="cc" style="left:657px;top:838px">£42,419.84</div>
<div class="cl" style="left:748px;top:821px">定金</div>
<div class="cc" style="left:748px;top:838px;color:#008000">£0.00</div>
<div class="card" style="left:815px;width:199px"></div>
<div class="cc" style="left:830px;top:830px;font-weight:bold;color:#000">CNY</div>
<div class="cl" style="left:881px;top:821px">金额</div>
<div class="cc" style="left:881px;top:838px">¥803.50</div>
<div class="cl" style="left:952px;top:821px">定金</div>
<div class="cc" style="left:952px;top:838px;color:#008000">¥0.00</div>
<div class="card" style="left:1020px;width:205px"></div>
<div class="cc" style="left:1035px;top:830px;font-weight:bold;color:#000">JPY</div>
<div class="cl" style="left:1080px;top:821px">金额</div>
<div class="cc" style="left:1080px;top:838px">¥1,000.00</div>
<div class="cl" style="left:1164px;top:821px">定金</div>
<div class="cc" style="left:1164px;top:838px;color:#008000">¥0.00</div>
<div class="abs" style="left:144px;top:891px;font-size:14px;line-height:16px;color:#111">合计</div>
<div class="cl" style="left:145px;width:120px;text-align:center;top:881px">数量</div>
<div class="cc" style="left:145px;width:120px;text-align:center;top:901px;font-weight:bold;color:#111;letter-spacing:0.3px">871</div>
<div class="cl" style="left:209px;width:120px;text-align:center;top:881px">已发货数量</div>
<div class="cc" style="left:209px;width:120px;text-align:center;top:901px;font-weight:bold;color:#008000;letter-spacing:0.3px">149</div>
<div class="cl" style="left:289px;width:120px;text-align:center;top:881px">未发货数量</div>
<div class="cc" style="left:289px;width:120px;text-align:center;top:901px;font-weight:bold;color:#ff0000;letter-spacing:0.3px">722</div>
<div class="cl" style="left:384px;width:120px;text-align:center;top:881px">货币</div>
<div class="cc" style="left:384px;width:120px;text-align:center;top:901px;font-weight:bold;color:#111;letter-spacing:0.3px">USD</div>
<div class="cl" style="left:480px;top:881px">合计金额</div>
<div class="cc" style="left:480px;top:901px;font-weight:bold;color:#111;letter-spacing:0.5px">$57,379.91</div>
<div class="cl" style="left:577px;top:881px">定金</div>
<div class="cc" style="left:577px;top:901px;font-weight:bold;color:#008000;letter-spacing:0.5px">$3,000.00</div>
<div class="btn" style="left:744px;top:883px;width:60px;height:32px;background:#2196f3;color:#fff;box-shadow:0 1px 3px rgba(0,0,0,.3);font-weight:500">导出</div>

<!-- annotations -->
<div class="abs" style="left:1249px;top:135px;width:335px;height:614px;border:2.6px solid #ff1a1a;border-radius:3px"></div>
<div class="abs anno" style="left:1321px;top:97px">销售订单的状态</div>
<div class="abs" style="left:115px;top:785px;width:1146px;height:94px;border:3px solid #ff1a1a;border-radius:4px"></div>
<div class="abs anno" style="left:1279px;top:817px">根据货币来汇总</div>
<div class="abs anno" style="left:209px;top:150px">生成<span style="font-size:22px">invoice</span></div>
<svg class="abs" style="left:260px;top:140px" width="110" height="80" viewBox="260 140 110 80"><path d="M272.2 214.4 L277.3 202.2 L281.3 205.2 L360.5 147.3 L284.2 208.6 L285.6 213.8 Z" fill="#ff1a1a"/></svg>

<!-- IME toolbar -->
<div class="abs" style="left:1747px;top:903px;width:166px;height:22px;background:#fff;border-top:1px solid #a9c6ee"></div>
<svg class="abs" style="left:1719px;top:897px" width="36" height="28" viewBox="0 0 36 28"><path d="M4 6 L26 0.5 Q30 -0.5 31 3 L36 24 Q37 28 33 29 L10 34 Q6 35 5 31 L0.5 11 Q-0.5 7 4 6Z" fill="#f25a1f"/><path d="M25 8 Q16 7 9.5 11 Q6 14 11 16 Q16 17 21 18 Q25 20 19 23 Q14 25 9 25" fill="none" stroke="#fff" stroke-width="3.2" stroke-linecap="round"/></svg>
<div class="abs" style="left:1758px;top:905px;font-size:15px;line-height:18px;font-weight:900;color:#1a6fdc">中</div>
<svg class="abs" style="left:1784px;top:908px" width="14" height="15" viewBox="0 0 14 15"><circle cx="2.5" cy="4" r="1.8" fill="none" stroke="#1a6fdc" stroke-width="1.3"/><path d="M10.5 8 Q12 8.5 11 11 L9 14" fill="none" stroke="#1a6fdc" stroke-width="2.2" stroke-linecap="round"/></svg>
<svg class="abs" style="left:1807px;top:907px" width="14" height="17" viewBox="0 0 14 17"><rect x="4" y="0.5" width="6" height="10" rx="3" fill="#1a6fdc"/><path d="M1.5 7.5 Q1.5 13 7 13 Q12.5 13 12.5 7.5 M7 13 V16 M4.5 16.3 H9.5" fill="none" stroke="#1a6fdc" stroke-width="1.5"/></svg>
<svg class="abs" style="left:1830px;top:909px" width="17" height="13" viewBox="0 0 17 13"><rect x="0.8" y="0.8" width="15.4" height="11.4" rx="1.5" fill="#1a6fdc"/><g fill="#fff"><rect x="3" y="3" width="2" height="1.7"/><rect x="6" y="3" width="2" height="1.7"/><rect x="9" y="3" width="2" height="1.7"/><rect x="12" y="3" width="2" height="1.7"/><rect x="3" y="6" width="2" height="1.7"/><rect x="6" y="6" width="2" height="1.7"/><rect x="9" y="6" width="2" height="1.7"/><rect x="12" y="6" width="2" height="1.7"/><rect x="4.5" y="9" width="8" height="1.5"/></g></svg>
<svg class="abs" style="left:1854px;top:904px" width="20" height="20" viewBox="0 0 20 20"><defs><linearGradient id="tg" x1="0" y1="0" x2="1" y2="1"><stop offset="0" stop-color="#f0605a"/><stop offset="1" stop-color="#8a6cf5"/></linearGradient></defs><path d="M1 7 L6 4 Q9 6 12 4 L16 7 L15 11 L13.5 10.5 V19 H4 V10.5 L2 11 Z" fill="url(#tg)"/><circle cx="16" cy="3.5" r="2.6" fill="#f35a3a"/></svg>
<svg class="abs" style="left:1879px;top:909px" width="15" height="14" viewBox="0 0 15 14"><g fill="#1a6fdc"><rect x="0.5" y="0.5" width="6" height="6" rx="1.5"/><rect x="8.5" y="0.5" width="6" height="6" rx="1.5"/><rect x="0.5" y="7.5" width="6" height="6" rx="1.5"/><rect x="8.5" y="7.5" width="6" height="6" rx="1.5"/></g><rect x="10.5" y="2.5" width="2" height="2" fill="#fff"/></svg>
<svg class="abs" style="left:1899px;top:904px" width="14" height="21" viewBox="0 0 14 21"><circle cx="10" cy="12" r="10" fill="#f4f1f0"/><path d="M1.5 11 Q8 6 14 9 V14 Q8 17 2 15Z" fill="#f06a2a"/><circle cx="5" cy="12" r="1.2" fill="#222"/></svg>
</body></html>
